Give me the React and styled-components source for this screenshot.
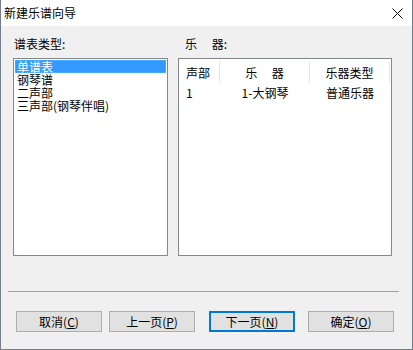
import React from "react";
import styled, { createGlobalStyle } from "styled-components";

const GlobalStyle = createGlobalStyle`
  html, body {
    margin: 0;
    padding: 0;
    background: #ffffff;
  }
  * {
    box-sizing: border-box;
  }
`;

const FONT = `"Noto Sans CJK SC", "Liberation Sans", sans-serif`;

const Window = styled.div`
  width: 413px;
  height: 350px;
  display: flex;
  flex-direction: column;
  border: 1px solid #717d8d;
  border-top: none;
  font-family: ${FONT};
  font-size: 12px;
  color: #000;
`;

const TitleBar = styled.div`
  height: 26px;
  flex: none;
  display: flex;
  align-items: center;
  justify-content: space-between;
  padding: 0 9px 0 3px;
  background: #ffffff;
  font-size: 12px;
  line-height: 14px;
`;

const Body = styled.div`
  flex: 1;
  display: flex;
  flex-direction: column;
  background: #f0f0f0;
`;

const Panels = styled.div`
  display: flex;
  gap: 10px;
  padding: 11px 0 0 12px;
`;

const Column = styled.div`
  display: flex;
  flex-direction: column;
`;

const Label = styled.div`
  height: 14px;
  line-height: 14px;
  margin-bottom: 7px;
  padding-left: ${(p) => p.$indent}px;
  white-space: pre;
`;

const ListBox = styled.div`
  width: ${(p) => p.$width}px;
  height: 198px;
  border: 1px solid #828790;
  background: #ffffff;
  padding: 1px 1px;
`;

const Item = styled.div`
  height: 13px;
  line-height: 13px;
  padding-left: 2px;
  white-space: nowrap;
  color: ${(p) => (p.$selected ? "#ffffff" : "#000000")};
  background: ${(p) => (p.$selected ? "#3399ff" : "transparent")};
  outline: ${(p) => (p.$selected ? "1px dotted #e89a4a" : "none")};
  outline-offset: -1px;
`;

const Grid = styled.div`
  display: grid;
  grid-template-columns: 41px 90px 80px;
`;

const HeadCell = styled.div`
  height: 21px;
  margin-top: 3px;
  line-height: 21px;
  border-right: 1px solid #e5e5e5;
  text-align: ${(p) => p.$align};
  padding-left: ${(p) => (p.$align === "left" ? 7 : 0)}px;
  white-space: pre;
`;

const Cell = styled.div`
  height: 20px;
  line-height: 20px;
  text-align: ${(p) => p.$align};
  padding-left: ${(p) => (p.$align === "left" ? 7 : 0)}px;
  white-space: pre;
`;

const Separator = styled.div`
  height: 1px;
  margin: 35px 13px 0 7px;
  background: #a0a0a0;
`;

const ButtonRow = styled.div`
  display: flex;
  margin-top: 19px;
  padding-left: 15px;
`;

const Button = styled.button`
  width: 86px;
  height: 21px;
  margin-left: ${(p) => p.$gap}px;
  padding: 0;
  font-family: ${FONT};
  font-size: 12px;
  line-height: 14px;
  color: #000;
  background: #e1e1e1;
  border: ${(p) => (p.$focused ? "2px solid #0078d7" : "1px solid #adadad")};
  border-radius: 0;
  cursor: default;

  u {
    text-decoration-thickness: 1px;
    text-underline-offset: 1px;
  }
`;

function CloseIcon() {
  return (
    <svg width="11" height="11" viewBox="0 0 11 11">
      <path d="M0.5 0.5 L10.5 10.5 M10.5 0.5 L0.5 10.5" stroke="#000" strokeWidth="1" fill="none" />
    </svg>
  );
}

const staffTypes = ["单谱表", "钢琴谱", "二声部", "三声部(钢琴伴唱)"];

const buttons = [
  { text: "取消(", key: "C", gap: 0 },
  { text: "上一页(", key: "P", gap: 7 },
  { text: "下一页(", key: "N", gap: 14, focused: true },
  { text: "确定(", key: "O", gap: 13 },
];

export default function App() {
  return (
    <>
      <GlobalStyle />
      <Window>
        <TitleBar>
          <span>新建乐谱向导</span>
          <CloseIcon />
        </TitleBar>
        <Body>
          <Panels>
            <Column>
              <Label $indent={1}>谱表类型:</Label>
              <ListBox $width={155}>
                {staffTypes.map((t, i) => (
                  <Item key={t} $selected={i === 0}>{t}</Item>
                ))}
              </ListBox>
            </Column>
            <Column>
              <Label $indent={7}>{"乐\u3000 器:"}</Label>
              <ListBox $width={214} style={{ padding: 0 }}>
                <Grid>
                  <HeadCell $align="left">声部</HeadCell>
                  <HeadCell $align="center">{"乐\u3000 器"}</HeadCell>
                  <HeadCell $align="center">乐器类型</HeadCell>
                  <Cell $align="left">1</Cell>
                  <Cell $align="center">1-大钢琴</Cell>
                  <Cell $align="center">普通乐器</Cell>
                </Grid>
              </ListBox>
            </Column>
          </Panels>
          <Separator />
          <ButtonRow>
            {buttons.map((b) => (
              <Button key={b.key} $gap={b.gap} $focused={b.focused}>
                {b.text}
                <u>{b.key}</u>)
              </Button>
            ))}
          </ButtonRow>
        </Body>
      </Window>
    </>
  );
}
